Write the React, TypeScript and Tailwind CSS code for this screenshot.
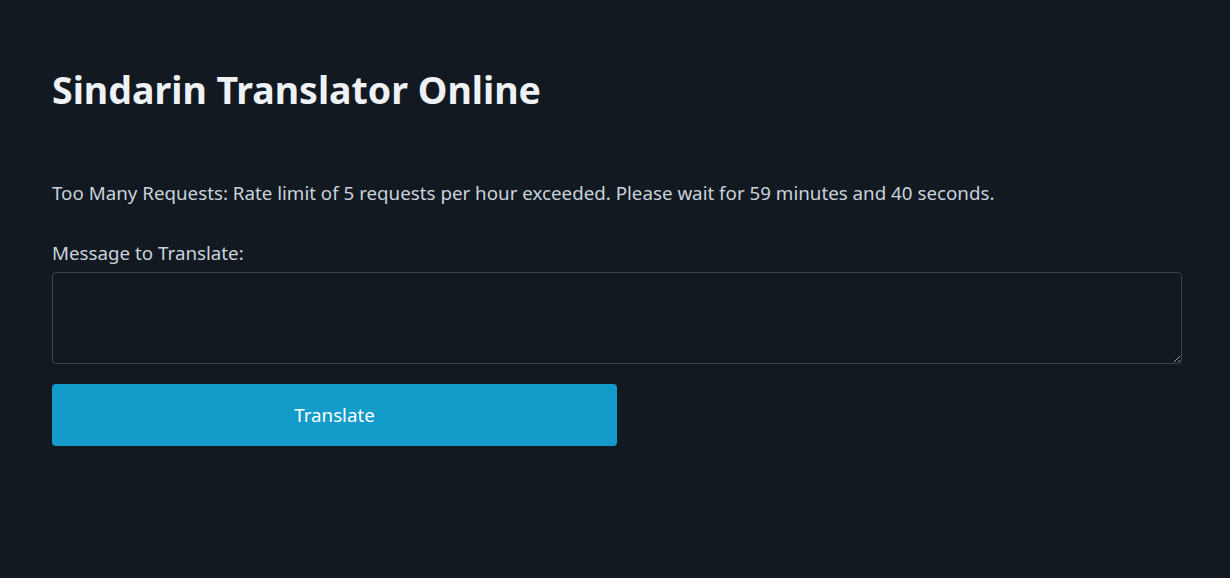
import React from "react";

export default function App() {
  return (
    <div className="min-h-[578px] w-full bg-[#121920] pl-[52px] pr-[48px] pt-[62px] text-[#cfd8e2]" style={{ fontFamily: '"Noto Sans", "Open Sans", sans-serif' }}>
      <h1 className="text-[37.5px] font-bold leading-[56px] text-[#eef2f7]">Sindarin Translator Online</h1>
      <p className="mt-[61px] text-[18.75px] leading-[28px] text-[#c9d3de]">
        Too Many Requests: Rate limit of 5 requests per hour exceeded. Please wait for 59 minutes and 40 seconds.
      </p>
      <label className="mt-[32px] block text-[18.75px] leading-[28px] text-[#c9d3de]">Message to Translate:</label>
      <textarea className="mt-[5px] block h-[92px] w-full rounded-[4px] border border-[#3a4450] bg-[#121920] p-2 text-[#cfd8e2] outline-none" />
      <button className="mt-[20px] h-[62px] w-[565px] rounded-[4px] bg-[#139bca] text-[18.75px] text-white">Translate</button>
    </div>
  );
}
